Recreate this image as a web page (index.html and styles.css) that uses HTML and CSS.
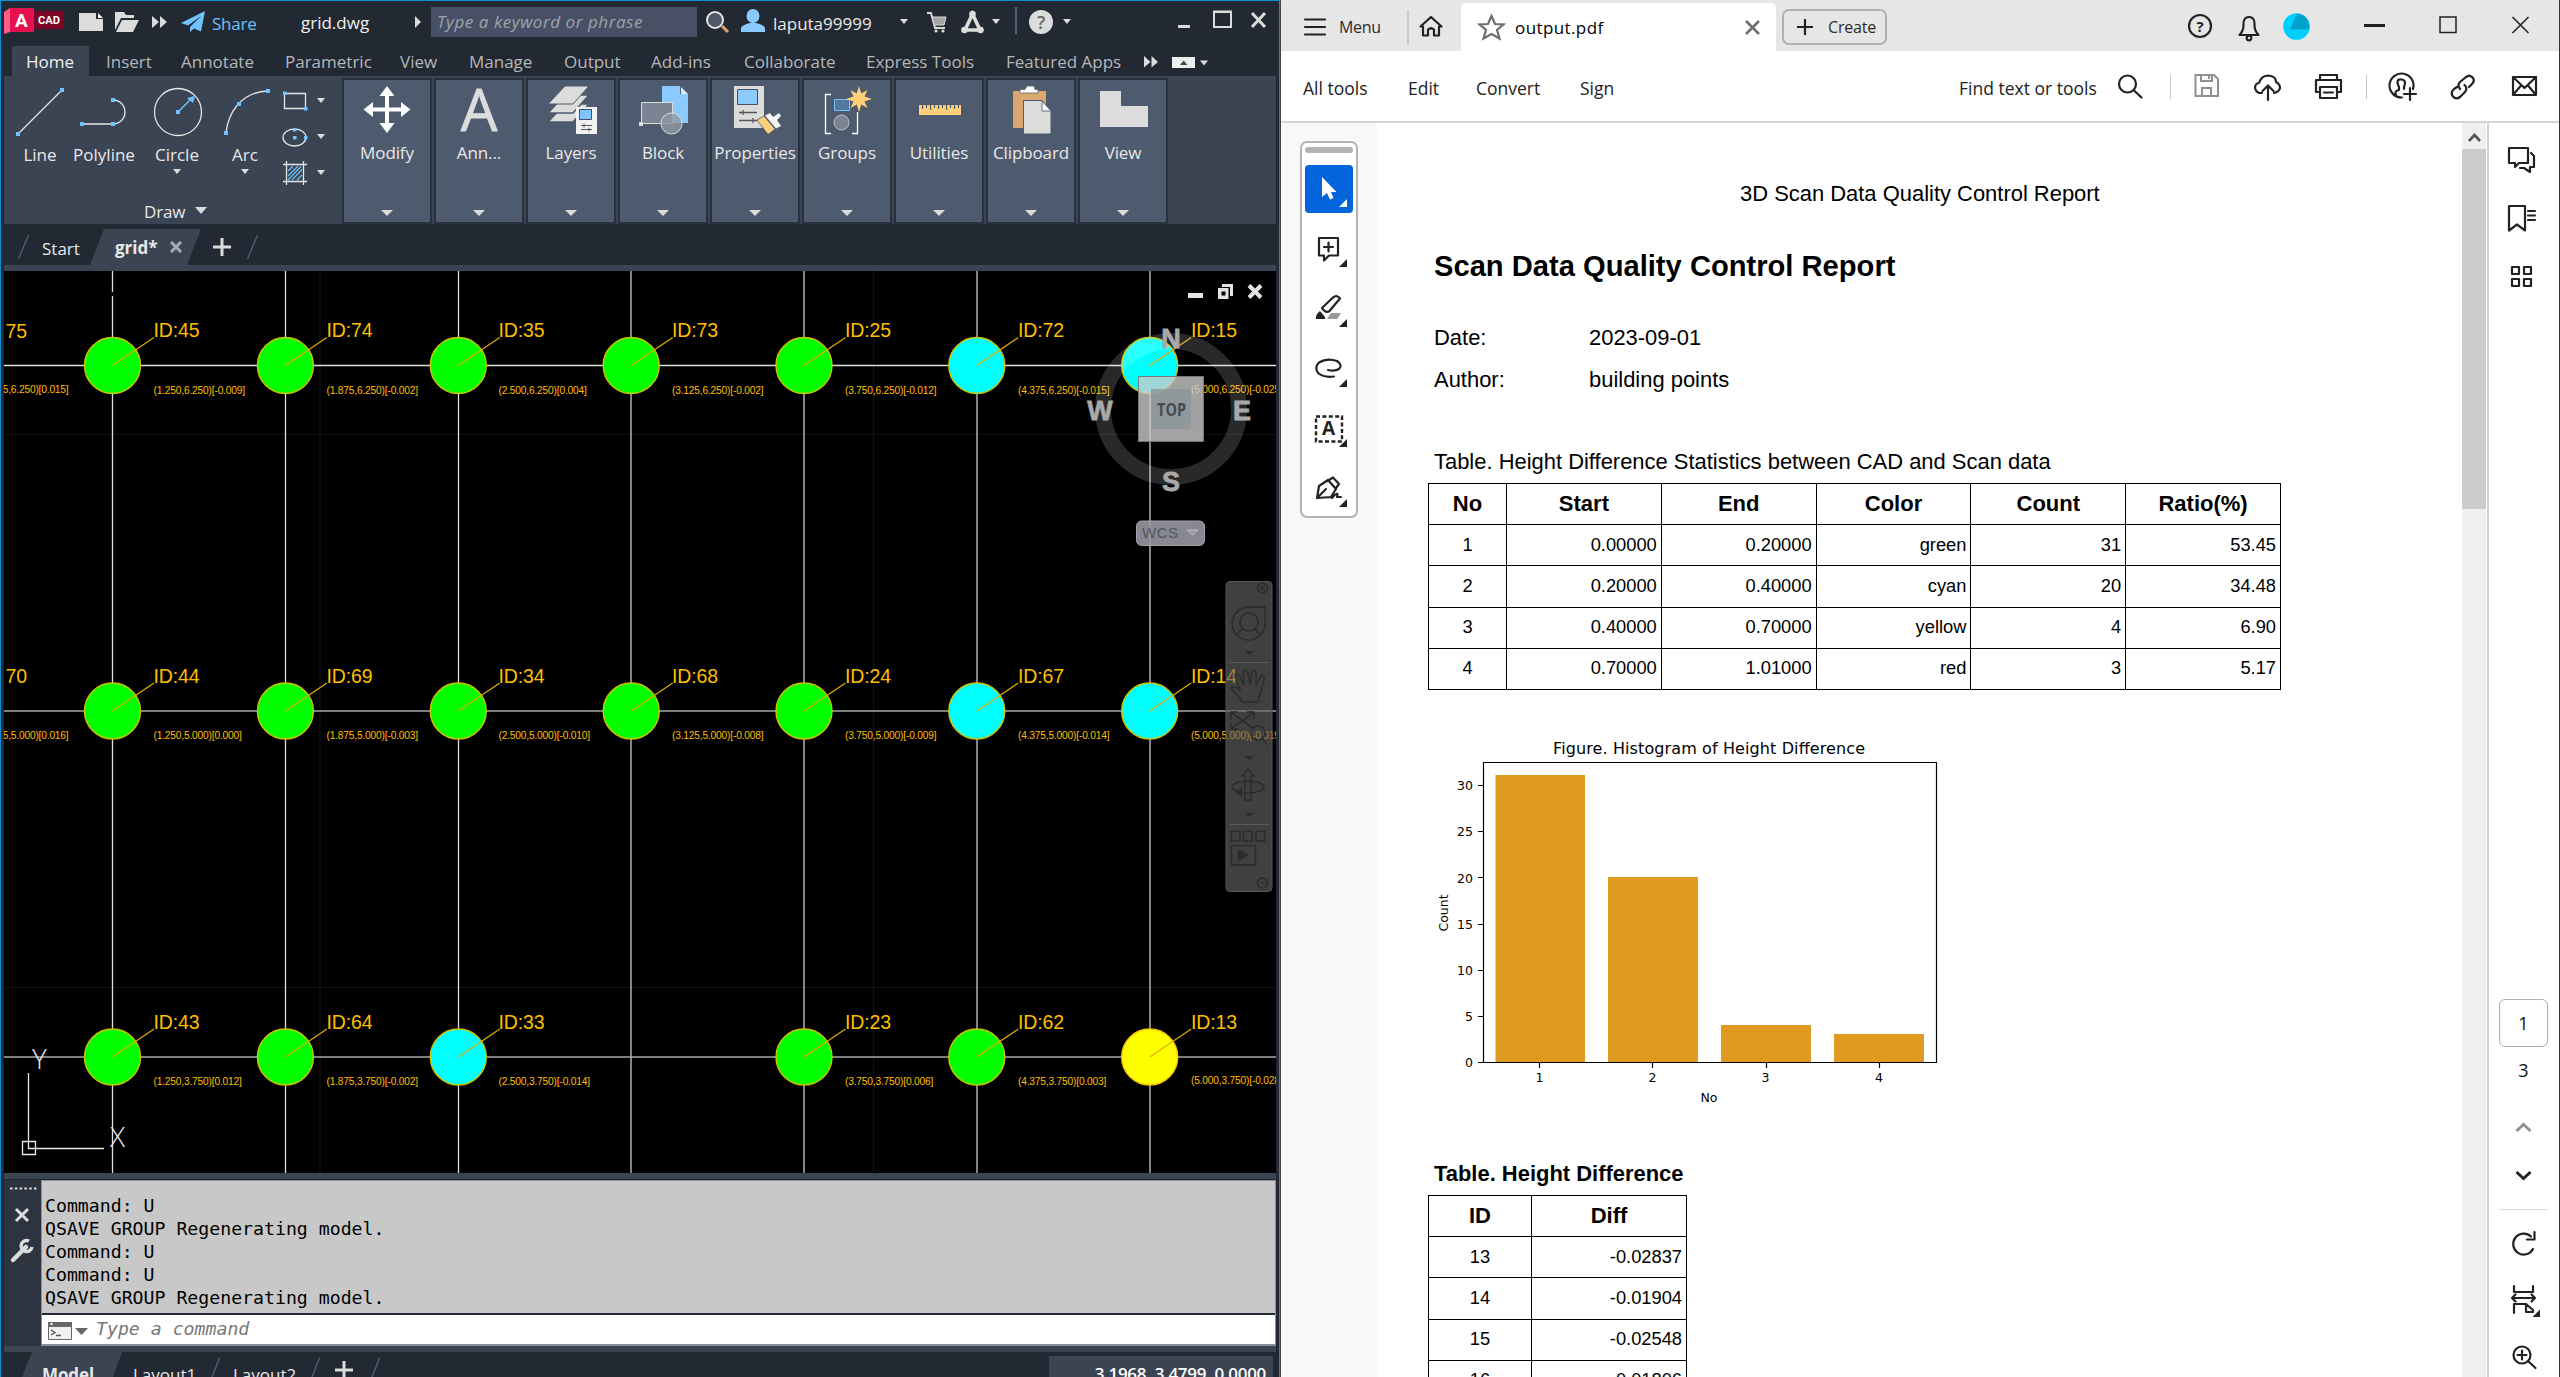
FILE: index.html
```html
<!DOCTYPE html>
<html lang="en">
<head>
<meta charset="utf-8">
<title>grid.dwg / output.pdf</title>
<link rel="stylesheet" href="styles.css">
</head>
<body>
<div class="desktop">

<section class="cad">
  <header class="cad-title">
    <svg viewBox="4 1 71 44" width="71" height="44"><path d="M4 12L10 8V32L4 34Z" fill="#ff5b85"/><path d="M34 11H64V29H34Z" fill="#7a0626"/><path d="M10 8H34V32H10Z" fill="#e51050"/><text x="15" y="27" class="logo-a">A</text><text x="38" y="24" class="logo-cad" textLength="22" lengthAdjust="spacingAndGlyphs">CAD</text></svg>
    <svg viewBox="75 1 36 44" width="36" height="44"><path d="M79 13H96V19H103V31H79Z" fill="#dcdcdc"/><path d="M98 13L103 18H98Z" fill="#fff"/></svg>
    <svg viewBox="111 1 37 44" width="37" height="44"><path d="M115 30V12H124L126 15H134V18H121L115 30Z" fill="#dcdcdc"/><path d="M122 20H139L133 32H116Z" fill="#dcdcdc"/></svg>
    <svg viewBox="148 1 30 44" width="30" height="44"><path d="M152 16L159 22L152 28ZM160 16L167 22L160 28Z" fill="#dcdcdc"/></svg>
    <svg viewBox="178 1 34 44" width="34" height="44"><path d="M205 11L181 23L188 25.500L201 16L190 27L190 32L194 28.500L201 31.500Z" fill="#6fc3ff"/></svg>
    <span class="share">Share</span>
    <span class="filename">grid.dwg</span>
    <svg viewBox="409 1 22 44" width="22" height="44"><path d="M415 16L421 22L415 28Z" fill="#dcdcdc"/></svg>
    <span class="search">Type a keyword or phrase</span>
    <svg viewBox="697 1 38 44" width="38" height="44"><path d="M722 26L728 32" stroke="#d9a871" stroke-width="3"/><circle cx="715" cy="20" r="8" fill="#4e5868" stroke="#e6e6e6" stroke-width="2"/></svg>
    <svg viewBox="735 1 38 44" width="38" height="44"><ellipse cx="753" cy="16" rx="6.500" ry="7" fill="#8acaff"/><path d="M741 32V28Q742 25 750 23H756Q764 25 765 28V32Z" fill="#8acaff"/></svg>
    <span class="user">laputa99999</span>
    <svg viewBox="895 1 25 44" width="25" height="44"><path d="M900 19H908L904 24Z" fill="#dcdcdc"/></svg>
    <svg viewBox="920 1 35 44" width="35" height="44"><path d="M927 13H931L935 28H945" fill="none" stroke="#dcdcdc" stroke-width="1.800"/><path d="M932 17H946L944 25H934Z" fill="#a5a5a5" stroke="#dcdcdc"/><circle cx="936" cy="31" r="1.600" fill="#dcdcdc"/><circle cx="943" cy="31" r="1.600" fill="#dcdcdc"/></svg>
    <svg viewBox="955 1 55 44" width="55" height="44"><path d="M972.500 14L965 30H980Z" fill="none" stroke="#dcdcdc" stroke-width="3.600"/><g fill="#dcdcdc"><circle cx="972.500" cy="14" r="3.300"/><circle cx="964.500" cy="30" r="3.300"/><circle cx="980.500" cy="30" r="3.300"/><path d="M992 19H1000L996 24Z"/></g></svg>
    <svg viewBox="1010 1 155 44" width="155" height="44"><path d="M1016 7V34" stroke="#56607a" stroke-width="2"/><circle cx="1041" cy="22" r="12" fill="#dcdcdc"/><text x="1041" y="28.500" class="help">?</text><path d="M1063 19H1071L1067 24Z" fill="#dcdcdc"/></svg>
    <svg viewBox="1165 1 111 44" width="111" height="44"><path d="M1178 25H1190V28H1178Z" fill="#dcdcdc"/><path d="M1214 12H1231V27H1214Z" fill="none" stroke="#dcdcdc" stroke-width="2"/><path d="M1213 10.500H1232V13H1213Z" fill="#dcdcdc"/><path d="M1252 13L1265 27M1265 13L1252 27" stroke="#dcdcdc" stroke-width="3"/></svg>
  </header>

  <nav class="ribbon-tabs">
    <span class="active">Home</span><span>Insert</span><span>Annotate</span><span>Parametric</span><span>View</span><span>Manage</span><span>Output</span><span>Add-ins</span><span>Collaborate</span><span>Express Tools</span><span>Featured Apps</span>
    <svg viewBox="1135 46 80 30" width="80" height="30"><path d="M1144 56L1150.500 62L1144 67.500ZM1151.500 56L1158 62L1151.500 67.500Z" fill="#dcdcdc"/><path d="M1172 57H1195V68H1172Z" fill="#eee"/><path d="M1180 65H1187.500L1183.700 60.500Z" fill="#4a4a4a"/><path d="M1200 60.500H1208L1204 65.500Z" fill="#dcdcdc"/></svg>
  </nav>

  <div class="ribbon">
    <div class="draw">
      <div class="tools">
        <div class="tool t-line"><svg viewBox="13 80 54 64" width="54" height="64"><path d="M18 134L62 90" class="ln"/><path d="M16 132h4v4h-4zM60 88h4v4h-4z" class="pt"/></svg><span>Line</span></div>
        <div class="tool t-poly"><svg viewBox="67 80 74 64" width="74" height="64"><path d="M82 124H113A12 12 0 0 0 113 100" class="ln"/><path d="M80 122h4v4h-4zM111 122h4v4h-4zM111 98h4v4h-4z" class="pt"/></svg><span>Polyline</span></div>
        <div class="tool t-circle"><svg viewBox="141 80 72 64" width="72" height="64"><circle cx="178" cy="112" r="23.500" class="ln"/><path d="M178 112L190 100" stroke="#6fc3ff" stroke-width="1.500"/><path d="M176 110h4v4h-4zM195 96L187 98L193 103Z" class="pt"/></svg><span>Circle</span><svg viewBox="0 0 8 5" width="8" height="5"><path d="M0 0H8L4 5Z" fill="#dcdcdc"/></svg></div>
        <div class="tool t-arc"><svg viewBox="213 80 64 64" width="64" height="64"><path d="M226 133C228 114 240 92 268 91" class="ln"/><path d="M224 131h4v4h-4zM237 102h4v4h-4zM266 89h4v4h-4z" class="pt"/></svg><span>Arc</span><svg viewBox="0 0 8 5" width="8" height="5"><path d="M0 0H8L4 5Z" fill="#dcdcdc"/></svg></div>
        <svg class="small-tools" viewBox="277 80 60 112" width="60" height="112"><path d="M284.500 93.500H305.500V108.500H284.500Z" class="ln"/><ellipse cx="294.500" cy="137.500" rx="11.500" ry="8.500" class="ln"/><path d="M286.500 161V185M303.500 161V185M283 164.500H307M283 181.500H307" class="ln"/><path d="M288 171L293 166M288 176L298 166M288 180L301 166.500M292 180L302 169.500M297 180L302 175" stroke="#6fc3ff" stroke-width="1.200"/><path d="M283 91.500h3.500v3.500h-3.500zM304 107h3.500v3.500h-3.500zM293 128h3.500v3.500h-3.500zM293 136h3.500v3.500h-3.500zM304 136h3.500v3.500h-3.500z" class="pt"/><path d="M317 98H325L321 103ZM317 134H325L321 139ZM317 170H325L321 175Z" fill="#dcdcdc"/></svg>
      </div>
      <div class="panel-title">Draw <svg viewBox="0 0 12 7" width="12" height="7"><path d="M0 0H12L6 7Z" fill="#dcdcdc"/></svg></div>
    </div>
    <div class="panels">
      <div class="panel"><svg viewBox="-43 80 86 60" width="86" height="60"><path d="M0 86L7.500 96H2V107.500H14V102L23.500 109.500L14 117V111.500H2V123H7.500L0 133L-7.500 123H-2V111.500H-14V117L-23.500 109.500L-14 102V107.500H-2V96H-7.500Z" fill="#fff"/></svg><span>Modify</span><i></i></div>
      <div class="panel"><svg viewBox="-43 80 86 60" width="86" height="60"><text x="0" y="131" class="big-a">A</text></svg><span>Ann...</span><i></i></div>
      <div class="panel"><svg viewBox="-43 80 86 60" width="86" height="60"><path d="M-6 104H18L2 122H-23Z" fill="#dcdcdc" stroke="#4e5a6d" stroke-width="1.500"/><path d="M-6 95H18L2 113H-23Z" fill="#dcdcdc" stroke="#4e5a6d" stroke-width="1.500"/><path d="M-6 86H18L2 104H-23Z" fill="#dcdcdc" stroke="#4e5a6d" stroke-width="1"/><path d="M5 107H26V134H5Z" fill="#f2f2f2"/><path d="M8.500 109.500H20.500V119.500H8.500Z" fill="#7cc5ff" stroke="#465060"/><path d="M10 125.500H21M10 129.500H21M13 123.500V127.500M18 127.500V131.500" stroke="#555"/></svg><span>Layers</span><i></i></div>
      <div class="panel"><svg viewBox="-43 80 86 60" width="86" height="60"><path d="M-1 86H17V94H25V123H-1Z" fill="#8acaff"/><path d="M18 87L25 94H18Z" fill="#d8efff"/><path d="M-21.500 102.500H9.500V123.500H-21.500Z" fill="#7b8492" stroke="#dcdcdc"/><circle cx="8.500" cy="123.500" r="10.500" fill="#8f98a3" fill-opacity=".8" stroke="#dcdcdc"/><path d="M-24 122h4v4h-4z" fill="#dcdcdc"/></svg><span>Block</span><i></i></div>
      <div class="panel"><svg viewBox="-43 80 86 60" width="86" height="60"><path d="M-21 86H9V128H-21Z" fill="#dcdcdc"/><path d="M-17.500 89.500H2.500V104.500H-17.500Z" fill="#8acaff" stroke="#465060"/><path d="M-16 112.500H2M-16 120.500H2M-12 110V115M-2 118V123" stroke="#555" stroke-width="1.300"/><path d="M2 120L9 116L20 129L13 134.500Z" fill="#ffd07a" stroke="#4e5a6d" stroke-width=".8"/><path d="M10 115.500L15 113L18 117L24 113L26 116L22 120L26 126L21 128.500Z" fill="#f4f4f4"/></svg><span>Properties</span><i></i></div>
      <div class="panel"><svg viewBox="-43 80 86 60" width="86" height="60"><path d="M-16 94.500H-21.500V133.500H-16M5 133.500H10.500V112" fill="none" stroke="#fff" stroke-width="1.300"/><path d="M-12.500 99.500H2.500V110.500H-12.500Z" fill="#54799f" stroke="#6fc3ff"/><circle cx="-5.500" cy="122.500" r="7.500" fill="#7b8492" stroke="#c0c0c0"/><path d="M12 86L14.300 93.500L20.500 90L17.500 96.500L25 99L17.500 101.500L20.500 108L14.300 104.500L12 112L9.700 104.500L3.500 108L6.500 101.500L-1 99L6.500 96.500L3.500 90L9.700 93.500Z" fill="#ffd07a"/></svg><span>Groups</span><i></i></div>
      <div class="panel"><svg viewBox="-43 80 86 60" width="86" height="60"><path d="M-20 105H22V115H-20Z" fill="#ffd07a"/><path d="M-16.500 105V109M-12.500 105V108M-8.500 105V110M-4.500 105V108M-.500 105V109M3.500 105V108M7.500 105V110M11.500 105V108M15.500 105V109M19.500 105V108" stroke="#4e5a6d" stroke-width="1.200"/></svg><span>Utilities</span><i></i></div>
      <div class="panel"><svg viewBox="-43 80 86 60" width="86" height="60"><path d="M-18 91H15V128H-18Z" fill="#d9a871"/><path d="M-11 93V89.500H-6L-4 86H3L4 89.500H7V93Z" fill="#fff" stroke="#4e5a6d" stroke-width=".7"/><path d="M-7.500 100.500H11L20 110.500V134H-7.500Z" fill="#dcdcdc" stroke="#4e5a6d"/><path d="M11 101L20 111H11Z" fill="#f8f8f8" stroke="#4e5a6d" stroke-width=".8"/></svg><span>Clipboard</span><i></i></div>
      <div class="panel"><svg viewBox="-43 80 86 60" width="86" height="60"><path d="M-23 91H-2V106H25V127H-23Z" fill="#dcdcdc"/></svg><span>View</span><i></i></div>
    </div>
  </div>

  <nav class="file-tabs">
    <svg viewBox="4 224 38 41" width="38" height="41"><path d="M18.500 259L28.500 235" stroke="#56607a" stroke-width="1.300"/></svg>
    <span class="start">Start</span>
    <div class="file-tab"><span>grid*</span><svg viewBox="0 0 12 12" width="12" height="12"><path d="M1 1L11 11M11 1L1 11" stroke="#a9adb3" stroke-width="3"/></svg></div>
    <svg viewBox="201 224 70 41" width="70" height="41"><path d="M213 247H231M222 238V256" stroke="#dcdcdc" stroke-width="3"/><path d="M247.500 259L257.500 235" stroke="#56607a" stroke-width="1.300"/></svg>
  </nav>

  <div class="viewport">
    <svg viewBox="4 271 1272 902" width="1272" height="902">
      <g stroke="#111219" stroke-width="1.200"><path d="M320 271V1173M873.500 271V1173M4 434.500H1276M4 987.500H1276"/></g>
      <g stroke="#dedede" stroke-width="1.300"><path d="M112.500 271V1173M285.500 271V1173M458.500 271V1173M4 365.500H1276"/></g>
      <g stroke="#a6a6a6" stroke-width="1.600"><path d="M631 271V1173M804 271V1173M977 271V1173M1150 271V1173M4 711H1276M4 1057H1276"/></g>
      <path d="M112.500 292V296" stroke="#000" stroke-width="2"/>
      <g stroke="#cfc400" stroke-width="1.400" fill="#0f0">
        <circle cx="112.500" cy="365.500" r="28"/><circle cx="285.400" cy="365.500" r="28"/><circle cx="458.300" cy="365.500" r="28"/><circle cx="631.200" cy="365.500" r="28"/><circle cx="804" cy="365.500" r="28"/>
        <circle cx="976.800" cy="365.500" r="28" fill="#0ff"/><circle cx="1149.700" cy="365.500" r="28" fill="#0ff"/>
        <circle cx="112.500" cy="711" r="28"/><circle cx="285.400" cy="711" r="28"/><circle cx="458.300" cy="711" r="28"/><circle cx="631.200" cy="711" r="28"/><circle cx="804" cy="711" r="28"/>
        <circle cx="976.800" cy="711" r="28" fill="#0ff"/><circle cx="1149.700" cy="711" r="28" fill="#0ff"/>
        <circle cx="112.500" cy="1057" r="28"/><circle cx="285.400" cy="1057" r="28"/><circle cx="458.300" cy="1057" r="28" fill="#0ff"/><circle cx="804" cy="1057" r="28"/><circle cx="976.800" cy="1057" r="28"/>
        <circle cx="1149.700" cy="1057" r="28" fill="#ff0" stroke="#ffc400"/>
      </g>
      <path stroke="#e0ad00" stroke-width="1.200" d="M112.500 365.500l41.500-28M285.400 365.500l41.500-28M458.300 365.500l41.500-28M631.200 365.500l41.500-28M804 365.500l41.500-28M976.800 365.500l41.500-28M1149.700 365.500l41.500-28M112.500 711l41.500-28M285.400 711l41.500-28M458.300 711l41.500-28M631.200 711l41.500-28M804 711l41.500-28M976.800 711l41.500-28M1149.700 711l41.500-28M112.500 1057l41.500-28M285.400 1057l41.500-28M458.300 1057l41.500-28M804 1057l41.500-28M976.800 1057l41.500-28M1149.700 1057l41.500-28"/>
      <g class="id">
        <text x="5.500" y="338">75</text><text x="153.500" y="337">ID:45</text><text x="326.500" y="337">ID:74</text><text x="498.500" y="337">ID:35</text><text x="672" y="337">ID:73</text><text x="845" y="337">ID:25</text><text x="1018" y="337">ID:72</text><text x="1191" y="337">ID:15</text>
        <text x="5.500" y="683">70</text><text x="153.500" y="683">ID:44</text><text x="326.500" y="683">ID:69</text><text x="498.500" y="683">ID:34</text><text x="672" y="683">ID:68</text><text x="845" y="683">ID:24</text><text x="1018" y="683">ID:67</text><text x="1191" y="683">ID:14</text>
        <text x="153.500" y="1028.500">ID:43</text><text x="326.500" y="1028.500">ID:64</text><text x="498.500" y="1028.500">ID:33</text><text x="845" y="1028.500">ID:23</text><text x="1018" y="1028.500">ID:62</text><text x="1191" y="1028.500">ID:13</text>
      </g>
      <g class="xy">
        <text x="68.500" y="393" text-anchor="end">5,6.250)[0.015]</text><text x="153.500" y="394">(1.250,6.250)[-0.009]</text><text x="326.500" y="394">(1.875,6.250)[-0.002]</text><text x="498.500" y="394">(2.500,6.250)[0.004]</text><text x="672" y="394">(3.125,6.250)[-0.002]</text><text x="845" y="394">(3.750,6.250)[-0.012]</text><text x="1018" y="394">(4.375,6.250)[-0.015]</text><text x="1191" y="393">(5.000,6.250)[-0.025]</text>
        <text x="68.500" y="738.500" text-anchor="end">5,5.000)[0.016]</text><text x="153.500" y="739">(1.250,5.000)[0.000]</text><text x="326.500" y="739">(1.875,5.000)[-0.003]</text><text x="498.500" y="739">(2.500,5.000)[-0.010]</text><text x="672" y="739">(3.125,5.000)[-0.008]</text><text x="845" y="739">(3.750,5.000)[-0.009]</text><text x="1018" y="739">(4.375,5.000)[-0.014]</text><text x="1191" y="739">(5.000,5.000)[-0.019]</text>
        <text x="153.500" y="1085">(1.250,3.750)[0.012]</text><text x="326.500" y="1085">(1.875,3.750)[-0.002]</text><text x="498.500" y="1085">(2.500,3.750)[-0.014]</text><text x="845" y="1085">(3.750,3.750)[0.006]</text><text x="1018" y="1085">(4.375,3.750)[0.003]</text><text x="1191" y="1084">(5.000,3.750)[-0.028]</text>
      </g>
      <g fill="none" stroke="#e8e8e8" stroke-width="1.300"><path d="M28.500 1073V1148.500H104M22.500 1141.500H35.500V1154.500H22.500Z"/></g>
      <g class="axis"><text x="39.500" y="1068.500">Y</text><text x="117.500" y="1147">X</text></g>

      <g fill="#e4e4e4"><path d="M1188 293H1203V298H1188Z"/><path d="M1222 284H1233V296H1230V287H1222ZM1218 288H1228.500V299H1218ZM1221.500 291.500V295.500H1225.500V291.500Z" fill-rule="evenodd"/></g>
      <path d="M1249 285.500L1261 297.500M1261 285.500L1249 297.500" stroke="#e4e4e4" stroke-width="4"/>

      <circle cx="1171" cy="409" r="68" fill="none" stroke="#fff" stroke-opacity=".16" stroke-width="16"/>
      <g class="compass"><text x="1171" y="347.500">N</text><text x="1100" y="419.500">W</text><text x="1242" y="419.500">E</text><text x="1171" y="491">S</text></g>
      <path d="M1138.500 376.500H1203.500V441.500H1138.500Z" fill="#cbcbcb" fill-opacity=".8" stroke="#777"/>
      <path d="M1151 389H1191V429H1151Z" fill="#8b9499" fill-opacity=".75"/>
      <text x="1157" y="415.500" class="top" textLength="29" lengthAdjust="spacingAndGlyphs">TOP</text>
      <rect x="1136.500" y="521" width="68" height="24.500" rx="5" fill="#9a9ba6" fill-opacity=".88" stroke="#a2a2a8"/>
      <text x="1142" y="538" class="wcs" textLength="36">WCS</text><path d="M1187 530H1198L1192.500 535Z" fill="#9a9aa4" stroke="#bbb"/>

      <rect x="1226" y="581.500" width="46" height="310" rx="4" fill="#626262" fill-opacity=".65" stroke="#555"/>
      <g fill="none" stroke="#2a2c2d" stroke-width="1.600">
        <circle cx="1262.500" cy="588" r="5"/><path d="M1260 585.500l5 5M1265 585.500l-5 5M1260 883H1265"/>
        <path d="M1249 607H1265V622A16.500 16.500 0 1 1 1249 607Z"/><circle cx="1249" cy="622" r="9"/><path d="M1242 629L1237 634M1255 629L1260 634"/>
        <path d="M1242 702C1240 697 1234 692 1231 688Q1233 685 1240 690L1235 675Q1238 672 1240 677L1244 685L1243 671Q1246 668 1248 673L1250 684L1252 671Q1256 669 1256 674V686L1261 676Q1265 674 1264 679L1258 702Z"/>
        <path d="M1232 713L1253 728M1253 713L1232 728M1231 719V712H1238M1247 712H1254V719M1231 722V729H1238"/><circle cx="1258" cy="733" r="7"/><path d="M1262 738L1267 745"/>
        <ellipse cx="1248" cy="787" rx="16" ry="6"/><path d="M1245 800V776H1242L1248 769L1254 776H1251V800Z"/>
        <path d="M1231.500 831.500H1240V841H1231.500ZM1243.500 831.500H1252V841H1243.500ZM1256 831.500H1264.500V841H1256ZM1231.500 845.500H1255.500V865H1231.500Z"/><circle cx="1262.500" cy="883" r="5"/>
      </g>
      <g fill="#2a2c2d"><path d="M1245 651H1253.500L1249 655ZM1245 756H1253.500L1249 760ZM1245 813H1253.500L1249 817ZM1238 849L1249 855L1238 861ZM1235 792L1242 787V797Z"/></g>
      <path d="M1229 662.500H1269M1229 824.500H1269" stroke="#5a5a5a"/>
    </svg>
  </div>

  <div class="command">
    <svg viewBox="4 1179 37 166" width="37" height="166"><path d="M10 1187.500H37" stroke="#dcdcdc" stroke-width="2" stroke-dasharray="2.500 2.300"/><path d="M16 1208L28 1220M28 1208L16 1220" stroke="#dcdcdc" stroke-width="3"/><path d="M13 1259L26 1246" stroke="#dcdcdc" stroke-width="4.500" stroke-linecap="round"/><path d="M29 1240A5.500 5.500 0 1 0 32 1246" fill="none" stroke="#dcdcdc" stroke-width="3.500"/></svg>
    <div class="console">
      <div class="history"><p>Command: U</p><p>QSAVE GROUP Regenerating model.</p><p>Command: U</p><p>Command: U</p><p>QSAVE GROUP Regenerating model.</p></div>
      <div class="prompt"><svg viewBox="42 1315 50 29" width="50" height="29"><path d="M48.500 1322.500H71.500V1339.500H48.500Z" fill="#f0f0f0" stroke="#666"/><path d="M48 1322H72V1327H48Z" fill="#666"/><path d="M50.500 1323h2v2h-2z" fill="#fff"/><path d="M51 1330l4 2.500l-4 2.500M56 1335.500H61" fill="none" stroke="#555" stroke-width="1.300"/><path d="M75 1328H88L81.500 1335Z" fill="#666"/></svg><span>Type a command</span></div>
    </div>
  </div>

  <footer class="layouts">
    <div class="model"><span>Model</span></div>
    <span class="layout l1">Layout1</span>
    <svg viewBox="194 1352 39 25" width="39" height="25"><path d="M210 1382L219.500 1358" stroke="#56607a" stroke-width="1.300"/></svg>
    <span class="layout l2">Layout2</span>
    <svg viewBox="295 1352 100 25" width="100" height="25"><path d="M310 1382L319.500 1358M370 1382L379.500 1358" stroke="#56607a" stroke-width="1.300"/><path d="M335 1370H353M344 1361V1379" stroke="#dcdcdc" stroke-width="3"/></svg>
    <span class="coords">3.1968, 3.4799, 0.0000</span>
  </footer>
</section>

<section class="pdf">
  <header class="pdf-title">
    <svg viewBox="1281 0 58 51" width="58" height="51"><path d="M1305 19.500H1325M1305 27H1325M1305 34.500H1325" class="ic"/></svg>
    <span class="menu">Menu</span>
    <svg viewBox="1395 0 66 51" width="66" height="51"><path d="M1408 10V45" stroke="#b0b0b0"/><path d="M1423 34.500V26.500H1420.500L1431 17L1441.500 26.500H1439V35.500H1434V29.500Q1431 27 1428 29.500V35.500H1423Z" class="ic"/></svg>
    <div class="pdf-tab"><svg viewBox="1461 3 54 48" width="54" height="48"><path d="M1491.500 16L1495 24L1503.500 24.500L1497 30L1499.500 38.500L1491.500 34L1483.500 38.500L1486 30L1479.500 24.500L1488 24Z" fill="none" stroke="#6e6e6e" stroke-width="2.200"/></svg><span>output.pdf</span><svg viewBox="0 0 15 15" width="15" height="15"><path d="M1 1L14 14M14 1L1 14" stroke="#6e6e6e" stroke-width="2.600"/></svg></div>
    <div class="create"><svg viewBox="0 0 16 16" width="16" height="16"><path d="M0 8H16M8 0V16" stroke="#222" stroke-width="2.200"/></svg><span>Create</span></div>
    <svg class="win" viewBox="2175 0 384 51" width="384" height="51"><circle cx="2200" cy="26" r="11" class="ic"/><text x="2200" y="31.500" class="q">?</text><path d="M2239.500 35H2258.500Q2254.500 31 2254.500 25Q2255 17 2249 17Q2243 17 2243.500 25Q2243.500 31 2239.500 35Z" class="ic"/><circle cx="2249" cy="38" r="2.300" class="ic"/><circle cx="2296.500" cy="26.500" r="13.300" fill="#00d0ff"/><path d="M2297 13.500A13.300 13.300 0 0 1 2309 29.500H2290Z" fill="#00a2cc"/><path d="M2364 25.500H2385" stroke="#222" stroke-width="3"/><path d="M2440 17H2456V32.500H2440Z" fill="none" stroke="#222" stroke-width="1.500"/><path d="M2512.500 17L2528.500 33M2528.500 17L2512.500 33" stroke="#222" stroke-width="1.600"/></svg>
  </header>
  <div class="pdf-bar">
    <span>All tools</span><span>Edit</span><span>Convert</span><span>Sign</span>
    <span class="find">Find text or tools</span>
    <svg viewBox="2110 51 449 70" width="449" height="70">
      <g class="ic"><circle cx="2127.500" cy="84" r="8.500"/><path d="M2134 90.500L2141.500 97.500"/></g>
      <path d="M2170.500 75V99M2366.500 75V99" stroke="#c8c8c8"/>
      <g fill="none" stroke="#909090" stroke-width="2"><path d="M2195.500 75H2214L2218 79V96H2195.500ZM2201 75V81H2212V75M2202 96V88H2211V96M2209 75V79"/></g>
      <g class="ic"><path d="M2262 93H2259Q2255 91 2255 87Q2256 83 2259 83Q2261 76 2268 75.500Q2276 76 2276 82Q2280 84 2280 88Q2279 92 2274 93M2268 100V86M2262.500 91L2268 85.500L2273.500 91"/></g>
      <g class="ic"><path d="M2320 92H2316V80H2341V92H2337M2320 80V75H2337V80M2320 87H2337V98H2320ZM2324 92.500H2333"/></g>
      <g class="ic"><path d="M2413 89A12 12 0 1 0 2402 97.500M2396 95Q2394 91 2399 90V87Q2395 79 2401.500 79.500Q2407 80 2404 87V89M2410 88V100M2404 94H2416"/></g>
      <g class="ic"><path d="M2460 89Q2457 85 2460 82L2466 77Q2470 74 2473 78Q2475 81 2472 84L2469 87M2464.500 85Q2468 88 2465 92L2460 97Q2456 100 2453 96.500Q2450 93 2454 89L2457 87"/></g>
      <g class="ic"><path d="M2513 77H2536V95H2513ZM2513 77L2524.500 88L2536 77M2513 95L2521 85.500M2536 95L2528 85.500"/></g>
    </svg>
  </div>
  <div class="pdf-body">
    <aside class="left">
      <div class="quick">
        <b class="grip"></b>
        <div class="pick"><svg viewBox="1305 165 48 48" width="48" height="48"><path d="M1322 177V197L1327 193L1330 199.500L1333.500 198L1331 192H1336.500Z" fill="#fff"/><path d="M1347 199V207H1339Z" fill="#fff"/></svg></div>
        <svg viewBox="1305 213 48 301" width="48" height="301">
          <g class="ic"><path d="M1319 238H1338V255.500H1329L1324 260.500V255.500H1319ZM1328.500 242.500V251.500M1324 247H1333"/>
          <path d="M1322 308L1333 297.500Q1337 294.500 1340 298.500L1329 311.500Q1325 313 1322 308Z"/>
          <path d="M1334 376.500Q1324 378 1318 373Q1314 367 1319 362.500Q1327 357.500 1337 361Q1343 365 1339 369Q1335 371.500 1328 370"/></g>
          <path d="M1316 319Q1315 315 1320 311L1325 317V319Z" fill="#222"/><path d="M1327 319L1331 313H1341L1337 319Z" fill="#999"/>
          <path d="M1316 416.500H1342V441.500H1316Z" fill="none" stroke="#222" stroke-width="2.400" stroke-dasharray="4 2.400"/><text x="1328.500" y="435" class="ta">A</text>
          <g class="ic"><path d="M1317 498L1319 486L1328 480L1336 489L1331 497ZM1317 498L1326 489M1329 480L1333 477.500L1339 484L1336 488M1332 498Q1339 490 1337 497L1341 497"/></g>
          <path d="M1347 259V267H1339ZM1347 319V327H1339ZM1347 379V387H1339ZM1347 439V447H1339ZM1347 499V507H1339Z" fill="#222"/>
        </svg>
      </div>
    </aside>
    <main class="page">
      <p class="running">3D Scan Data Quality Control Report</p>
      <h1>Scan Data Quality Control Report</h1>
      <dl><dt>Date:</dt><dd>2023-09-01</dd><dt>Author:</dt><dd>building points</dd></dl>
      <p class="caption">Table. Height Difference Statistics between CAD and Scan data</p>
      <table class="stats">
        <tr><th class="no">No</th><th>Start</th><th>End</th><th>Color</th><th>Count</th><th>Ratio(%)</th></tr>
        <tr><td>1</td><td>0.00000</td><td>0.20000</td><td>green</td><td>31</td><td>53.45</td></tr>
        <tr><td>2</td><td>0.20000</td><td>0.40000</td><td>cyan</td><td>20</td><td>34.48</td></tr>
        <tr><td>3</td><td>0.40000</td><td>0.70000</td><td>yellow</td><td>4</td><td>6.90</td></tr>
        <tr><td>4</td><td>0.70000</td><td>1.01000</td><td>red</td><td>3</td><td>5.17</td></tr>
      </table>
      <svg class="chart" viewBox="1428 700 520 420" width="520" height="420">
        <path d="M1495.500 1063V776H1585V1063ZM1608 1063V878H1698V1063ZM1721 1063V1026H1811V1063ZM1834 1063V1035H1924V1063Z" fill="#de9b20"/>
        <path d="M1483.500 763.500H1936.500V1063.500H1483.500ZM1478 1063.500H1483M1478 1017.500H1483M1478 971.500H1483M1478 925.500H1483M1478 878.500H1483M1478 832.500H1483M1478 786.500H1483M1539.500 1064V1069M1652.500 1064V1069M1766.500 1064V1069M1879.500 1064V1069" fill="none" stroke="#000" stroke-width="1.200"/>
        <text x="1709" y="754.500" class="ct" textLength="312">Figure. Histogram of Height Difference</text>
        <g class="tick end"><text x="1473" y="1068">0</text><text x="1473" y="1022">5</text><text x="1473" y="976">10</text><text x="1473" y="930">15</text><text x="1473" y="884">20</text><text x="1473" y="837">25</text><text x="1473" y="791">30</text></g>
        <g class="tick"><text x="1539.500" y="1083">1</text><text x="1652.500" y="1083">2</text><text x="1765.500" y="1083">3</text><text x="1879" y="1083">4</text><text x="1709" y="1102.500">No</text><text transform="translate(1447.500 914) rotate(-90)">Count</text></g>
      </svg>
      <p class="caption bold">Table. Height Difference</p>
      <table class="diff">
        <tr><th class="id-col">ID</th><th>Diff</th></tr>
        <tr><td>13</td><td>-0.02837</td></tr>
        <tr><td>14</td><td>-0.01904</td></tr>
        <tr><td>15</td><td>-0.02548</td></tr>
        <tr><td>16</td><td>-0.01806</td></tr>
      </table>
    </main>
    <div class="scroll"><svg viewBox="2462 123 24 26" width="24" height="26"><path d="M2469 141L2474.500 135L2480 141" fill="none" stroke="#555" stroke-width="2.600"/></svg><b></b></div>
    <aside class="right">
      <svg viewBox="2489 123 69 177" width="69" height="177"><g class="ic"><path d="M2509 148H2528V163H2519L2515 167V163H2509ZM2531 153L2534 156V167H2530V172L2524 168H2520"/><path d="M2509 206H2525V230.500L2517 224.500L2509 230.500ZM2528 211H2535M2528 215.500H2535M2528 220H2535"/><path d="M2512 267H2519V274H2512ZM2524 267H2531V274H2524ZM2512 279H2519V286H2512ZM2524 279H2531V286H2524Z"/></g></svg>
      <div class="pager"><span class="current">1</span><span class="total">3</span></div>
      <svg viewBox="2489 1090 69 287" width="69" height="287"><path d="M2516.500 1131L2523.500 1124.500L2530.500 1131" fill="none" stroke="#909090" stroke-width="3"/><path d="M2516.500 1172L2523.500 1178.500L2530.500 1172" fill="none" stroke="#222" stroke-width="3"/><path d="M2499 1209.500H2548" stroke="#ddd"/><g class="ic"><path d="M2533 1249A10.500 10.500 0 1 1 2531 1236.500M2534.500 1232V1239.500H2527"/><path d="M2514 1286V1292H2533V1286M2512 1298H2535M2515.500 1294.500L2512 1298L2515.500 1301.500M2531.500 1294.500L2535 1298L2531.500 1301.500M2514 1313V1304H2526L2533 1310V1312H2526V1304"/><circle cx="2522" cy="1355" r="8.500"/><path d="M2528 1361L2535.500 1368M2522 1350.500V1359.500M2517.500 1355H2526.500"/></g><path d="M2540 1309.500V1317H2532.500Z" fill="#222"/></svg>
    </aside>
  </div>
</section>
</div>
</body>
</html>
```
FILE: styles.css
```css
* { box-sizing: border-box; margin: 0; padding: 0; }
body { width: 2560px; height: 1377px; overflow: hidden; background: #fff; font-family: "Open Sans", "Noto Sans", sans-serif; }
svg { display: block; flex: none; }
.desktop { display: flex; height: 1377px; overflow: hidden; }

/* ---------- drawing application ---------- */
.cad { width: 1281px; height: 1377px; flex: none; background: #222932; border-top: 1px solid #0b90d8; border-left: 1px solid #0b90d8; border-right: 1px solid #444; padding: 0 4px 0 3px; box-shadow: inset -1px 0 #0b90d8; color: #e8e8e8; font-size: 17px; white-space: nowrap; overflow: hidden; }
.cad-title { display: grid; height: 45px; align-items: center; grid-template-columns: 71px 36px 37px 30px 34px 89px 108px 22px 266px 38px 38px 122px 25px 35px 55px 155px 111px; }
.cad-title > svg { align-self: start; }
.logo-a { font: 700 19px Roboto, sans-serif; fill: #fff; }
.logo-cad { font: 700 11.500px Roboto, sans-serif; fill: #fff; }
.share { color: #6fc3ff; letter-spacing: -.2px; }
.filename { padding-bottom: 3px; color: #f0f0f0; }
.search { height: 30px; line-height: 29px; align-self: start; margin-top: 6px; background: #475064; padding-left: 6px; color: #9ea4ae; font-style: italic; letter-spacing: .55px; }
.help { font: 600 18px "Open Sans", sans-serif; fill: #666; text-anchor: middle; }

.ribbon-tabs { display: flex; height: 30px; padding-left: 8px; line-height: 32px; color: #b4b7bb; }
.ribbon-tabs span { flex: none; width: 74px; margin-right: 30px; }
.ribbon-tabs .active { width: 77px; padding-left: 14px; background: #3b4453; color: #f0f0f0; margin-right: 17px; }
.ribbon-tabs span:nth-child(2) { width: 45px; }
.ribbon-tabs span:nth-child(4) { width: 85px; }
.ribbon-tabs span:nth-child(5) { width: 39px; }
.ribbon-tabs span:nth-child(6) { width: 65px; }
.ribbon-tabs span:nth-child(7) { width: 57px; }
.ribbon-tabs span:nth-child(8) { width: 63px; }
.ribbon-tabs span:nth-child(9) { width: 92px; }
.ribbon-tabs span:nth-child(10) { width: 110px; }
.ribbon-tabs span:nth-child(11) { width: 119px; margin-right: 10px; }

.ribbon { display: flex; height: 148px; background: #3b4453; padding-top: 2px; }
.draw { width: 338px; padding: 2px 0 0 9px; }
.tools { display: flex; height: 116px; }
.tool { display: flex; flex-direction: column; align-items: center; line-height: 24px; }
.tool span + svg { margin-top: 2px; }
.tool svg + span { margin-top: -1px; }
.t-line { width: 54px; } .t-poly { width: 74px; } .t-circle { width: 72px; } .t-arc { width: 64px; }
.ln { fill: none; stroke: #e6e6e6; stroke-width: 1.300; }
.pt { fill: #6fc3ff; }
.panel-title { display: flex; gap: 10px; padding: 4px 0 0 131px; line-height: 24px; letter-spacing: -.2px; }
.panel-title svg { margin-top: 7px; }
.panels { display: flex; gap: 2px; height: 146px; }
.panel { width: 90px; height: 146px; border: 2px solid #2a313c; background: #4e5a6d; display: flex; flex-direction: column; align-items: center; line-height: 24px; }
.panel i { width: 0; height: 0; border: 6px solid transparent; border-top-color: #dcdcdc; border-bottom: 0; margin-top: 45px; }
.panel span { margin-top: 1px; letter-spacing: -.1px; }
.big-a { font: 400 58px "Open Sans", sans-serif; fill: #dcdcdc; stroke: #dcdcdc; stroke-width: .8px; text-anchor: middle; }

.file-tabs { display: flex; height: 41px; line-height: 49px; }
.start { width: 48px; }
.file-tab { width: 111px; height: 36px; margin-top: 5px; background: #3b4453; clip-path: polygon(14px 0, 100% 0, 97px 100%, 0 100%); display: flex; padding-left: 25px; line-height: 38px; font-weight: 700; }
.file-tab span { width: 55px; }
.file-tab svg { margin-top: 12px; }

.viewport { height: 914px; padding: 6px 0; background: #3b4453; }
.viewport svg { background: #000; }
.id { font: 19.500px "Liberation Sans", Arial, sans-serif; fill: #ffbf00; letter-spacing: -.15px; }
.xy { font: 10.200px "Liberation Sans", Arial, sans-serif; fill: #ffbf00; letter-spacing: -.18px; }
.axis { font: 300 28px "Open Sans", sans-serif; fill: #e8e8e8; text-anchor: middle; }
.compass { font: 700 27px "Liberation Sans", Arial, sans-serif; fill: #a9a9a9; stroke: #a9a9a9; stroke-width: .8px; text-anchor: middle; }
.top { font: 700 18px "Open Sans", sans-serif; fill: #454b50; }
.wcs { font: 15px "Liberation Sans", Arial, sans-serif; fill: #55565e; }

.command { display: flex; height: 167px; background: #2d3440; border-top: 1px solid #20252e; }
.console { flex: 1; border: 1px solid #8b8f98; border-bottom-width: 2px; background: #fff; font: 18.200px "DejaVu Sans Mono", monospace; color: #000; }
.history { height: 134px; background: #c8c8c8; border-bottom: 2px solid #222932; padding: 13px 0 0 3px; line-height: 23px; }
.prompt { display: flex; line-height: 27px; color: #777; font-style: italic; }
.prompt span { padding-left: 4px; }

.layouts { display: flex; height: 31px; border-top: 6px solid #3b4453; line-height: 45px; overflow: hidden; }
.model { width: 118px; margin-right: 11px; background: #3b4453; clip-path: polygon(28px 0, 100% 0, 109px 100%, 18px 100%); padding-left: 38px; font-weight: 700; letter-spacing: -.1px; }
.l1 { width: 61px; } .l2 { width: 62px; }
.coords { width: 224px; margin: 4px 3px 0 auto; background: #3b4453; text-align: right; padding-right: 7px; line-height: 36px; font-weight: 600; letter-spacing: -.3px; color: #fff; }

/* ---------- document viewer ---------- */
.pdf { flex: 1; height: 1377px; background: #fff; border-right: 1px solid #333; color: #2c2c2c; font-size: 16px; display: flex; flex-direction: column; white-space: nowrap; }
.ic { fill: none; stroke: #222; stroke-width: 2.200; stroke-linejoin: round; stroke-linecap: round; }
.pdf-title { display: flex; height: 51px; background: #e6e6e6; line-height: 54px; flex: none; }
.menu { width: 56px; letter-spacing: -.3px; }
.pdf-tab { display: flex; width: 315px; height: 48px; margin-top: 3px; background: #fff; border-radius: 5px 5px 0 0; line-height: 49px; color: #000; font-size: 17px; letter-spacing: .4px; }
.pdf-tab span { width: 230px; }
.pdf-tab svg:last-child { margin-top: 17px; }
.create { display: flex; width: 105px; height: 36px; margin: 9px 0 0 6px; border: 2px solid #b0b0b0; border-radius: 7px; align-items: center; padding-left: 13px; gap: 15px; line-height: 32px; letter-spacing: -.2px; }
.win { margin-left: auto; }
.q { font: 700 15px "Open Sans", sans-serif; fill: #222; text-anchor: middle; }
.pdf-bar { display: flex; flex: none; height: 72px; border-bottom: 2px solid #d5d5d5; line-height: 74px; padding-left: 22px; font-size: 17.500px; color: #222; }
.pdf-bar span:nth-child(1) { width: 105px; }
.pdf-bar span:nth-child(2) { width: 68px; }
.pdf-bar span:nth-child(3) { width: 104px; }
.pdf-bar .find { margin-left: auto; width: 151px; }
.pdf-body { display: flex; flex: 1; min-height: 0; overflow: hidden; }
.left { width: 96px; background: #f8f8f8; padding: 18px 0 0 19px; }
.quick { width: 58px; height: 377px; border: 2px solid #b3b3b3; border-radius: 7px; background: #fff; padding: 4px 3px 0; overflow: hidden; }
.grip { display: block; height: 6px; background: #b3b3b3; border-radius: 3px; margin-bottom: 12px; }
.pick { background: #0265dc; border-radius: 4px; height: 48px; width: 48px; }
.ta { font: 700 19px "Open Sans", sans-serif; fill: #222; text-anchor: middle; }
.page { width: 1085px; padding: 58px 0 0 51px; font: 21.950px/26px "Liberation Sans", Arial, sans-serif; color: #000; }
.running { padding-left: 312px; }
h1 { font-size: 29.150px; line-height: 34px; margin: 42px 0 42px 6px; }
dl { display: grid; grid-template-columns: 155px 1fr; row-gap: 16px; margin-left: 6px; }
.caption { margin: 56px 0 8px 6px; }
.caption.bold { margin: 42px 0 8px 6px; font-weight: 700; }
table { border-collapse: collapse; table-layout: fixed; font-size: 18.300px; line-height: 24px; }
.stats { width: 853px; } .diff { width: 259px; }
th, td { border: 1.500px solid #000; height: 41.200px; text-align: right; padding: 0 4px 1px; }
th { font-size: 22px; text-align: center; }
td:first-child { text-align: center; }
.no { width: 78px; } .id-col { width: 103px; }
.chart { margin-top: 9px; }
.ct { font: 16px "DejaVu Sans", sans-serif; text-anchor: middle; }
.tick { font: 12.500px "DejaVu Sans", sans-serif; text-anchor: middle; }
.tick.end { text-anchor: end; }
.scroll { width: 24px; background: #efefef; }
.scroll b { display: block; height: 360px; background: #cdcdcd; }
.right { flex: 1; margin-left: 1px; border-left: 2px solid #d3d3d3; display: flex; flex-direction: column; }
.pager { margin-top: 699px; height: 91px; display: flex; flex-direction: column; align-items: center; font-size: 18px; color: #111; padding-right: 1px; }
.current { width: 49px; height: 48px; border: 1px solid #b0b0b0; border-radius: 6px; text-align: center; line-height: 46px; }
.total { line-height: 30px; margin-top: 8px; }
```
